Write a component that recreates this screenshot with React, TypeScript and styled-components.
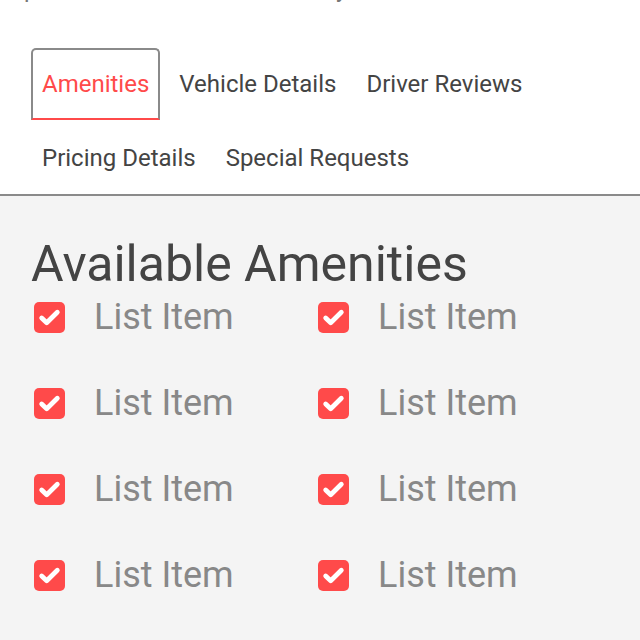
import React from "react";
import styled, { createGlobalStyle } from "styled-components";

const GlobalStyle = createGlobalStyle`
  html, body {
    margin: 0;
    padding: 0;
    background: #ffffff;
    font-family: Roboto, "Noto Sans", sans-serif;
    overflow: hidden;
  }
`;

const Page = styled.div`
  width: 640px;
  height: 640px;
  display: flex;
  flex-direction: column;
  overflow: hidden;
`;

const Intro = styled.p`
  margin: -25px 0 0;
  padding: 0 24px;
  font-size: 24px;
  line-height: 28px;
  color: #777;
  white-space: nowrap;
`;

const TabList = styled.div`
  display: flex;
  flex-wrap: wrap;
  row-gap: 2px;
  column-gap: 8px;
  padding: 45px 31px 0;
  border-bottom: 2px solid #8a8a8a;
`;

const Tab = styled.button<{ $active?: boolean }>`
  height: 72px;
  padding: 0 9px;
  font-family: Roboto, "Noto Sans", sans-serif;
  font-size: 24px;
  color: ${(p) => (p.$active ? "#ff4a4a" : "#444")};
  background: #fff;
  border: 2px solid ${(p) => (p.$active ? "#8a8a8a" : "transparent")};
  border-bottom-color: ${(p) => (p.$active ? "#ff4a4a" : "transparent")};
  border-radius: 5px 5px 0 0;
  cursor: pointer;
`;

const Panel = styled.section`
  flex: 1;
  background: #f4f4f4;
  padding: 36px 31px 0;
`;

const Heading = styled.h2`
  margin: 0;
  font-size: 50px;
  font-weight: 400;
  line-height: 64px;
  color: #444;
`;

const Grid = styled.ul`
  list-style: none;
  margin: 0;
  padding: 0 0 0 3px;
  display: grid;
  grid-template-columns: 284px 284px;
  grid-auto-rows: 86px;
  margin-top: -22px;
`;

const Item = styled.li`
  display: flex;
  align-items: center;
  gap: 29px;
  font-size: 36px;
  color: #888;
`;

const Check = styled.span`
  width: 31px;
  height: 31px;
  border-radius: 5px;
  background: #ff4a4a;
  display: flex;
  align-items: center;
  justify-content: center;
  flex-shrink: 0;
`;

const tabs = [
  "Amenities",
  "Vehicle Details",
  "Driver Reviews",
  "Pricing Details",
  "Special Requests",
];

const CheckBox: React.FC = () => (
  <Check>
    <svg width="25" height="25" viewBox="0 0 24 24">
      <path
        d="M4.5 12.5l4.8 4.6L19.5 7"
        fill="none"
        stroke="#fff"
        strokeWidth="4.6"
        strokeLinecap="round"
        strokeLinejoin="round"
      />
    </svg>
  </Check>
);

const App: React.FC = () => {
  return (
    <Page>
      <GlobalStyle />
      <Intro>please see what is included by our drivers</Intro>
      <TabList>
        {tabs.map((t, i) => (
          <Tab key={t} $active={i === 0}>
            {t}
          </Tab>
        ))}
      </TabList>
      <Panel>
        <Heading>Available Amenities</Heading>
        <Grid>
          {Array.from({ length: 8 }).map((_, i) => (
            <Item key={i}>
              <CheckBox />
              List Item
            </Item>
          ))}
        </Grid>
      </Panel>
    </Page>
  );
};

export default App;
